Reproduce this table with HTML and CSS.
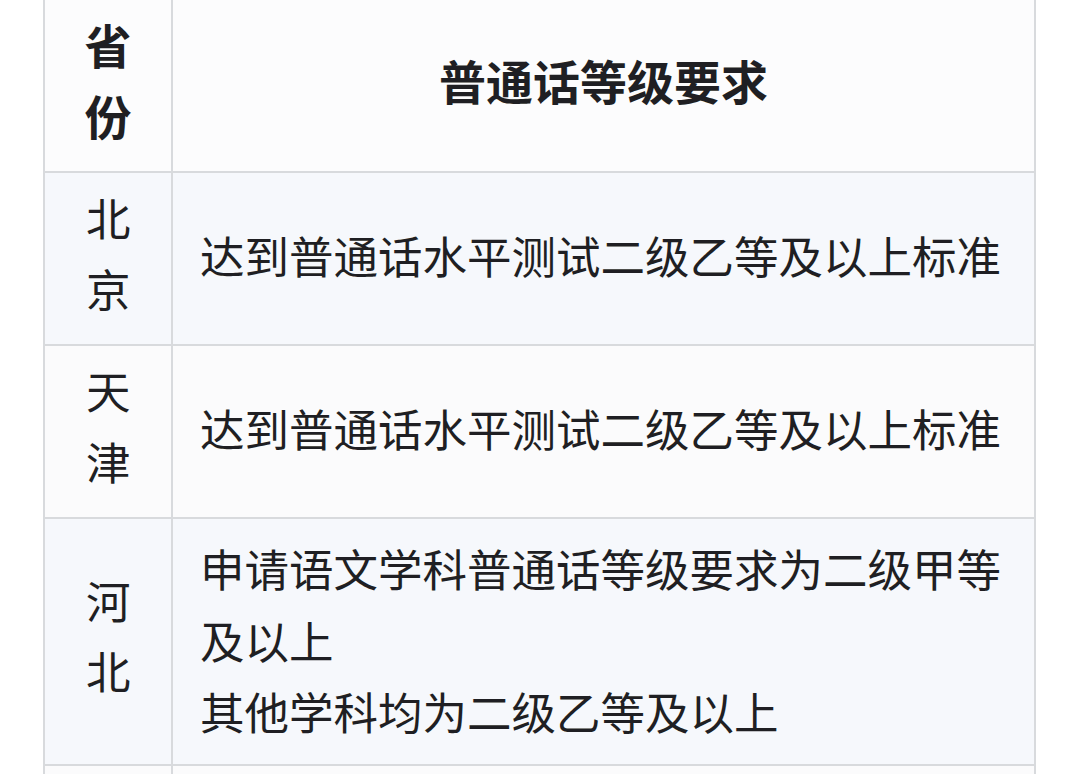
FILE: index.html
```html
<!DOCTYPE html>
<html lang="zh">
<head>
<meta charset="utf-8">
<link rel="stylesheet" href="styles.css">
</head>
<body>
<table class="req-table">
  <colgroup>
    <col class="col-prov">
    <col class="col-req">
  </colgroup>
  <thead>
    <tr>
      <th class="prov">省份</th>
      <th class="req">普通话等级要求</th>
    </tr>
  </thead>
  <tbody>
    <tr class="odd">
      <td class="prov">北京</td>
      <td class="req">达到普通话水平测试二级乙等及以上标准</td>
    </tr>
    <tr class="even">
      <td class="prov">天津</td>
      <td class="req">达到普通话水平测试二级乙等及以上标准</td>
    </tr>
    <tr class="odd">
      <td class="prov">河北</td>
      <td class="req multi">申请语文学科普通话等级要求为二级甲等及以上<br>其他学科均为二级乙等及以上</td>
    </tr>
    <tr class="even blank">
      <td class="prov"></td>
      <td class="req"></td>
    </tr>
  </tbody>
</table>
</body>
</html>
```
FILE: styles.css
```css
html, body {
  margin: 0;
  padding: 0;
  background: #ffffff;
}
body {
  font-family: "Noto Sans CJK SC", "Noto Sans", sans-serif;
  color: #1f1f23;
  overflow: hidden;
}
.req-table {
  border-collapse: collapse;
  margin: -2px 0 0 43px;
  width: 993px;
  table-layout: fixed;
}
.col-prov { width: 128px; }
.req-table th,
.req-table td {
  border: 2px solid #d8dadd;
  padding: 9px 20px 21px 27px;
  vertical-align: middle;
  text-align: left;
  font-size: 44.5px;
  line-height: 71px;
  font-weight: 400;
}
.req-table td.req {
  line-height: 71.5px;
  padding-top: 11px;
  padding-bottom: 19px;
}
.req-table td.req.multi {
  padding-top: 13px;
  padding-bottom: 17px;
}
.req-table .prov {
  padding-left: 41px;
  padding-right: 41px;
  text-align: center;
  line-height: 70.5px;
}
.req-table th {
  font-weight: 700;
  font-size: 47px;
  background: #fcfcfd;
}
.req-table th.req {
  text-align: center;
  padding-left: 20px;
}
.req-table th.prov {
  padding-left: 38px;
  padding-right: 38px;
}
.odd td { background: #f6f8fc; }
.even td { background: #fbfbfc; }
.blank td { height: 60px; }
```
